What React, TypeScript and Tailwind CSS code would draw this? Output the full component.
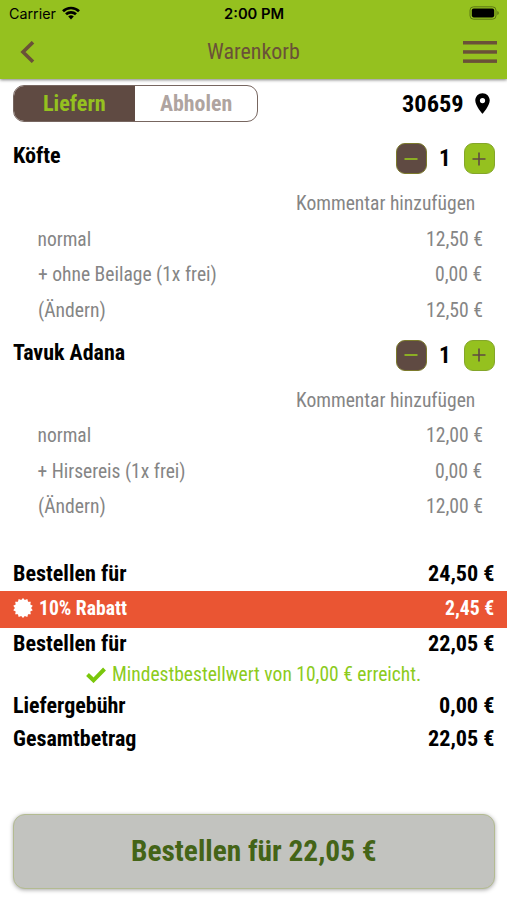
import { useLayoutEffect, useRef, useState } from "react";

type FitProps = { children: string; width: number; className?: string };

/** Condenses a single line of text horizontally to the given width. */
function Fit({ children, width, className = "" }: FitProps) {
  const ref = useRef<HTMLSpanElement>(null);
  const [scale, setScale] = useState(1);
  useLayoutEffect(() => {
    if (ref.current) setScale(width / ref.current.offsetWidth);
  }, [width, children]);
  return (
    <span className={`block shrink-0 whitespace-nowrap ${className}`} style={{ width }}>
      <span ref={ref} className="inline-block origin-left" style={{ transform: `scaleX(${scale})` }}>
        {children}
      </span>
    </span>
  );
}

type Line = { label: string; labelWidth: number; price: string; priceWidth: number };
type Item = { name: string; nameWidth: number; lines: Line[] };

const items: Item[] = [
  {
    name: "Köfte",
    nameWidth: 47.5,
    lines: [
      { label: "normal", labelWidth: 54, price: "12,50 €", priceWidth: 56.5 },
      { label: "+ ohne Beilage (1x frei)", labelWidth: 178.5, price: "0,00 €", priceWidth: 47.5 },
      { label: "(Ändern)", labelWidth: 67.5, price: "12,50 €", priceWidth: 56.5 },
    ],
  },
  {
    name: "Tavuk Adana",
    nameWidth: 112.5,
    lines: [
      { label: "normal", labelWidth: 54, price: "12,00 €", priceWidth: 56.5 },
      { label: "+ Hirsereis (1x frei)", labelWidth: 148, price: "0,00 €", priceWidth: 47.5 },
      { label: "(Ändern)", labelWidth: 67.5, price: "12,00 €", priceWidth: 56.5 },
    ],
  },
];

function CartItem({ item }: { item: Item }) {
  return (
    <section className="h-[196.7px]">
      <div className="flex h-[49.5px] justify-between pl-[13px] pr-[12.5px]">
        <Fit width={item.nameWidth} className="mt-[4px] h-[26px] text-[21.5px] leading-[26px] font-bold">
          {item.name}
        </Fit>
        <div className="mt-[4px] flex h-[31px] items-center">
          <button className="flex size-[31px] items-center justify-center rounded-[9px] border border-[#7c7a2c] bg-[#5f4a42]">
            <svg viewBox="0 0 14 14" className="size-[14px]" stroke="#95c11f" strokeWidth="1.7">
              <path d="M.5 7h13" />
            </svg>
          </button>
          <div className="flex w-[37px] justify-center">
            <Fit width={11.5} className="text-[24px] leading-[31px] font-bold">1</Fit>
          </div>
          <button className="flex size-[31px] items-center justify-center rounded-[9px] border border-[#84a62a] bg-[#95c11f]">
            <svg viewBox="0 0 14 14" className="size-[14px]" stroke="#5f4a42" strokeWidth="1.6">
              <path d="M.5 7h13M7 .5v13" />
            </svg>
          </button>
        </div>
      </div>
      <div className="flex h-[31px] items-center justify-end pr-[32px] text-[19.5px] leading-[26px] text-[#858585]">
        <Fit width={179.5}>Kommentar hinzufügen</Fit>
      </div>
      <div className="pt-[2.5px]">
        {item.lines.map((line, i) => (
          <div
            key={i}
            className="flex h-[35.5px] items-center justify-between pr-[25px] pl-[37.5px] text-[19.5px] leading-[26px] text-[#858585]"
          >
            <Fit width={line.labelWidth}>{line.label}</Fit>
            <Fit width={line.priceWidth}>{line.price}</Fit>
          </div>
        ))}
      </div>
    </section>
  );
}

function TotalRow({ label, labelWidth, value, valueWidth }: { label: string; labelWidth: number; value: string; valueWidth: number }) {
  return (
    <div className="flex h-[33px] items-center justify-between pr-[12.5px] pl-[13px] text-[22px] leading-[28px] font-bold">
      <Fit width={labelWidth}>{label}</Fit>
      <Fit width={valueWidth}>{value}</Fit>
    </div>
  );
}

function starPoints() {
  const points: string[] = [];
  for (let i = 0; i < 28; i++) {
    const r = i % 2 ? 8.1 : 10;
    const a = (i * Math.PI) / 14;
    points.push(`${(10 + r * Math.sin(a)).toFixed(2)},${(10 - r * Math.cos(a)).toFixed(2)}`);
  }
  return points.join(" ");
}

export default function App() {
  return (
    <div className="h-[900px] w-[507px] overflow-hidden bg-white font-['Roboto_Condensed','Roboto',sans-serif] text-black">
      <header className="h-[79px] bg-[#95c11f] shadow-[0_1px_3px_rgba(0,0,0,0.5)]">
        <div className="grid h-[28px] grid-cols-3 items-center px-[8px] font-['Inter',sans-serif] text-[14px] leading-[20px]">
          <div className="flex items-center gap-[6px] pl-[1px]">
            <Fit width={47}>Carrier</Fit>
            <svg viewBox="0 0 18 14" className="mb-[2px] h-[14px] w-[18px]" fill="none" stroke="black" strokeWidth="2.7">
              <path d="M1 5.2A11.6 11.6 0 0 1 17 5.2" />
              <path d="M4 8.3A7.2 7.2 0 0 1 14 8.3" />
              <path d="M9 13.5 6.2 10.6A4 4 0 0 1 11.8 10.6Z" fill="black" stroke="none" />
            </svg>
          </div>
          <div className="flex justify-center pl-[1px]">
            <Fit width={60} className="font-semibold">2:00 PM</Fit>
          </div>
          <svg viewBox="0 0 30 14" className="mb-[2px] h-[14px] w-[30px] justify-self-end">
            <rect x="1" y=".8" width="26" height="12.4" rx="3.5" fill="none" stroke="#5c7714" />
            <rect x="2.8" y="2.6" width="22.4" height="8.8" rx="1.8" />
            <path d="M28.3 5v4q1.5-.7 1.5-2t-1.5-2" fill="#5c7714" />
          </svg>
        </div>
        <div className="flex h-[48px] items-center justify-between pr-[10px] pl-[20px]">
          <div className="w-[24px]">
            <svg viewBox="0 0 16 22" className="h-[22px] w-[16px]" fill="none" stroke="#6a5138" strokeWidth="3.6">
              <path d="M13 1.2 3 11l10 9.8" />
            </svg>
          </div>
          <Fit width={93} className="text-[22px] leading-[28px] text-[#6a5138]">Warenkorb</Fit>
          <svg viewBox="0 0 34 22" className="h-[22px] w-[34px]" fill="#6a5138">
            <rect y="0" width="34" height="3.5" />
            <rect y="9.2" width="34" height="3.5" />
            <rect y="18.4" width="34" height="3.5" />
          </svg>
        </div>
      </header>

      <div className="flex h-[60px] items-start justify-between pt-[6px] pr-[17px] pl-[13px]">
        <div className="flex h-[37px] w-[245px] overflow-hidden rounded-[11px] border border-[#776660] text-[22px] leading-[35px] font-bold">
          <div className="flex w-[121px] justify-center bg-[#5f4a42] text-[#95c11f]">
            <Fit width={62.5}>Liefern</Fit>
          </div>
          <div className="flex flex-1 justify-center text-[#afa4a0]">
            <Fit width={72.5}>Abholen</Fit>
          </div>
        </div>
        <div className="flex h-[37px] items-center gap-[11px]">
          <Fit width={62} className="text-[24px] leading-[36px] font-bold">30659</Fit>
          <svg viewBox="0 0 16 22" className="mb-[1px] h-[21px] w-[15px]">
            <path
              fillRule="evenodd"
              d="M8 0C3.6 0 .3 3.4.3 7.7.3 13.2 8 22 8 22s7.7-8.8 7.7-14.3C15.7 3.4 12.4 0 8 0Zm0 5a2.8 2.8 0 1 1 0 5.6A2.8 2.8 0 0 1 8 5Z"
            />
          </svg>
        </div>
      </div>

      {items.map((item) => (
        <CartItem key={item.name} item={item} />
      ))}

      <div className="pt-[25.6px]">
        <TotalRow label="Bestellen für" labelWidth={113.5} value="24,50 €" valueWidth={66.5} />
      </div>
      <div className="flex h-[37px] items-center justify-between bg-[#ea5533] pr-[12.5px] pl-[13px] text-[19.5px] leading-[26px] font-bold text-white">
        <div className="flex items-center gap-[6px]">
          <svg viewBox="0 0 20 20" className="mb-[2px] size-[20px]" fill="white">
            <polygon points={starPoints()} />
          </svg>
          <Fit width={87.5}>10% Rabatt</Fit>
        </div>
        <Fit width={49.5}>2,45 €</Fit>
      </div>
      <TotalRow label="Bestellen für" labelWidth={113.5} value="22,05 €" valueWidth={66.5} />
      <div className="flex h-[29px] items-center justify-center gap-[6px] text-[19.5px] leading-[26px] text-[#8ccb1c]">
        <svg viewBox="0 0 20 16" className="h-[16px] w-[20px]" fill="none" stroke="#7ac70c" strokeWidth="4">
          <path d="m1.5 7.5 6 5.8L18.5 2" />
        </svg>
        <Fit width={309.5}>Mindestbestellwert von 10,00 € erreicht.</Fit>
      </div>
      <div className="-mt-[0.5px]">
        <TotalRow label="Liefergebühr" labelWidth={113} value="0,00 €" valueWidth={55.5} />
        <TotalRow label="Gesamtbetrag" labelWidth={123} value="22,05 €" valueWidth={66.5} />
      </div>

      <button className="mx-[13px] mt-[58.5px] flex h-[75px] w-[482px] items-center justify-center rounded-[12px] border border-[#b3bb91] bg-[#c2c3bf] pr-[3px] text-[29px] leading-[36px] font-bold text-[#446417] shadow-[0_1px_4px_rgba(0,0,0,0.35)]">
        <Fit width={246}>Bestellen für 22,05 €</Fit>
      </button>
    </div>
  );
}
